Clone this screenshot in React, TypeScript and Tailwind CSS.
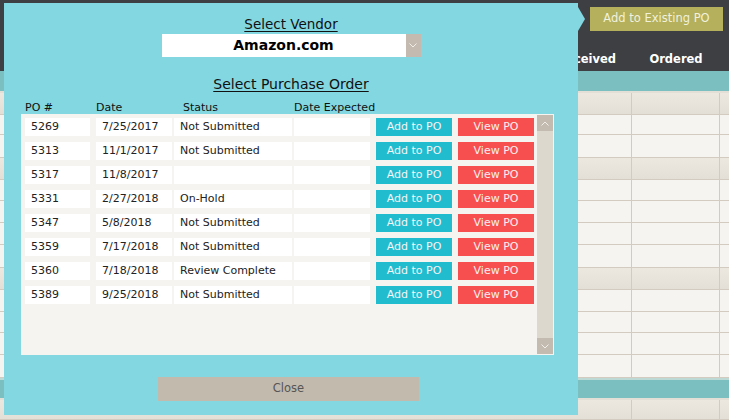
import React from 'react';

type BgRow = { kind: 'head' | 'row' | 'band'; h: number };

const bgRows: BgRow[] = [
  { kind: 'head', h: 22 },
  { kind: 'row', h: 20 },
  { kind: 'row', h: 23 },
  { kind: 'head', h: 22 },
  { kind: 'row', h: 21 },
  { kind: 'row', h: 22 },
  { kind: 'row', h: 22 },
  { kind: 'row', h: 23 },
  { kind: 'head', h: 22 },
  { kind: 'row', h: 22 },
  { kind: 'row', h: 21 },
  { kind: 'row', h: 22 },
  { kind: 'row', h: 23 },
  { kind: 'band', h: 22 },
  { kind: 'head', h: 20 },
];

const orders = [
  { po: '5269', date: '7/25/2017', status: 'Not Submitted' },
  { po: '5313', date: '11/1/2017', status: 'Not Submitted' },
  { po: '5317', date: '11/8/2017', status: '' },
  { po: '5331', date: '2/27/2018', status: 'On-Hold' },
  { po: '5347', date: '5/8/2018', status: 'Not Submitted' },
  { po: '5359', date: '7/17/2018', status: 'Not Submitted' },
  { po: '5360', date: '7/18/2018', status: 'Review Complete' },
  { po: '5389', date: '9/25/2018', status: 'Not Submitted' },
];

const Chevron = ({ up = false }: { up?: boolean }) => (
  <svg width="8" height="5" viewBox="0 0 8 5" className="block">
    <polyline
      points={up ? '0.5,4.5 4,1 7.5,4.5' : '0.5,0.5 4,4 7.5,0.5'}
      fill="none"
      stroke="#f1eee8"
      strokeWidth="1"
    />
  </svg>
);

const Background = () => (
  <div className="flex flex-col w-full h-full">
    {/* top bar */}
    <div className="h-[71px] bg-[#3e3f43] flex flex-col">
      <div className="flex justify-end pt-[7px] pr-[6px]">
        <div className="w-[133px] h-[24px] bg-[#b4b05c] text-[#f2f0de] text-[11.5px] flex items-center justify-center">
          Add to Existing PO
        </div>
      </div>
      <div className="mt-auto mb-[3px] grid grid-cols-[632px_88px_1fr] text-white font-bold text-[11.5px]">
        <div className="text-right pr-[16px]">Received</div>
        <div className="text-center">Ordered</div>
        <div />
      </div>
    </div>
    <div className="h-[20px] bg-[#7bbfc0]" />
    <div className="h-[2px] bg-[#e4dfd6]" />
    {bgRows.map((r, i) => (
      <div
        key={i}
        style={{ height: r.h }}
        className={
          r.kind === 'band'
            ? 'border-t-2 border-[#bcd9d6] bg-[#7bbfc0] border-b-2 border-b-[#e4dfd6]'
            : `grid grid-cols-[632px_88px_1fr] border-b border-[#d3cbc0] ${
                r.kind === 'head' ? 'bg-gradient-to-b from-[#ece8e0] to-[#e4dfd6]' : 'bg-[#f5f4f0]'
              }`
        }
      >
        {r.kind !== 'band' && (
          <>
            <div className="border-r border-[#d3cbc0]" />
            <div className="border-r border-[#d3cbc0]" />
            <div />
          </>
        )}
      </div>
    ))}
  </div>
);

const Modal = () => (
  <div className="absolute left-[4px] top-[3px] w-[574px] h-[412px] bg-[#82d7e0] flex flex-col items-center text-[#1a1a1a]">
    {/* pointer */}
    <div className="absolute left-full top-[4px] w-0 h-0 border-y-[12px] border-y-transparent border-l-[7px] border-l-[#82d7e0]" />

    <div className="mt-[12px] h-[18px] leading-[18px] text-[13.5px] underline underline-offset-2 text-[#111]">
      Select Vendor
    </div>
    <div className="mt-[1px] w-[259px] h-[23px] bg-white flex items-stretch">
      <div className="flex-1 flex items-center justify-center font-bold text-[14px] text-black">
        Amazon.com
      </div>
      <div className="w-[15px] bg-[#c4bab0] flex items-center justify-center">
        <Chevron />
      </div>
    </div>

    <div className="mt-[18px] h-[18px] leading-[18px] text-[14px] underline underline-offset-2 text-[#111]">
      Select Purchase Order
    </div>

    <div className="self-stretch ml-[21px] mt-[8px] h-[14px] leading-[14px] flex text-[11px] text-[#111]">
      <div className="w-[71px]">PO #</div>
      <div className="w-[87px]">Date</div>
      <div className="w-[111px]">Status</div>
      <div>Date Expected</div>
    </div>

    <div className="self-stretch ml-[17px] mr-[24px] mt-[-1px] h-[241px] bg-[#f5f4f0] flex">
      <div className="flex-1 flex flex-col gap-[6px] pt-[4px] pl-[4px] text-[11px]">
        {orders.map((o) => (
          <div key={o.po} className="flex h-[18px] items-stretch">
            <div className="w-[65px] bg-white pl-[6px] flex items-center text-[#222]">{o.po}</div>
            <div className="w-[76px] ml-[6px] bg-white pl-[6px] flex items-center text-[#222]">{o.date}</div>
            <div className="w-[118px] ml-[2px] bg-white pl-[6px] flex items-center text-[#222]">{o.status}</div>
            <div className="w-[76px] ml-[2px] bg-white" />
            <button className="w-[76px] ml-[6px] bg-[#22bccf] text-[#f4f4f4] flex items-center justify-center">
              Add to PO
            </button>
            <button className="w-[76px] ml-[6px] bg-[#f74f4f] text-[#f8f0f0] flex items-center justify-center">
              View PO
            </button>
          </div>
        ))}
      </div>
      <div className="w-[16px] my-[1px] mr-[1px] bg-[#ddd8cd] flex flex-col justify-between">
        <div className="h-[16px] bg-[#c4bbb0] flex items-center justify-center">
          <Chevron up />
        </div>
        <div className="h-[16px] bg-[#c4bbb0] flex items-center justify-center">
          <Chevron />
        </div>
      </div>
    </div>

    <button className="self-start ml-[154px] mt-[22px] w-[261px] h-[24px] bg-[#c3baae] text-[#555] text-[11.5px] flex items-center justify-center">
      Close
    </button>
  </div>
);

const App: React.FC = () => {
  return (
    <div className="relative w-[729px] h-[420px] overflow-hidden bg-[#f5f4f0] font-['DejaVu_Sans',sans-serif]">
      <Background />
      <Modal />
    </div>
  );
};

export default App;
